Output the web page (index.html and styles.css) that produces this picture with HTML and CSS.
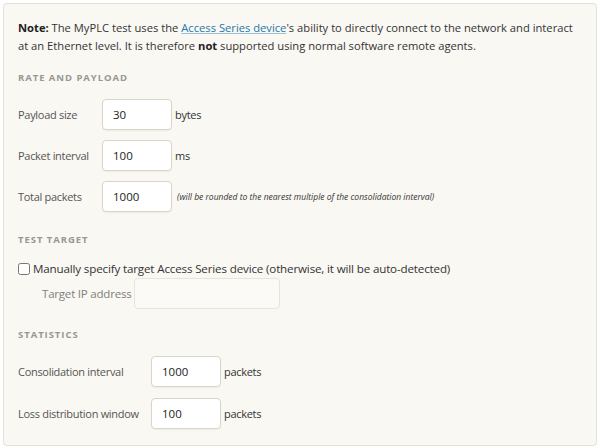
FILE: index.html
```html
<!DOCTYPE html>
<html>
<head>
    <meta charset="UTF-8">
    <title>MyPLC test settings</title>
    <link rel="stylesheet" href="styles.css">
</head>
<body>
    <div class="panel">
        <p class="note">
            <b>Note:</b> The MyPLC test uses the <a href="#">Access Series device</a>'s ability to directly connect to the network and interact at an Ethernet level. It is therefore <b>not</b> supported using normal software remote agents.
        </p>

        <!-- Rate and payload -->
        <h3 class="first">Rate and payload</h3>
        <div class="fields">
            <div class="row">
                <label class="lbl w1" for="payload">Payload size</label>
                <input type="text" id="payload" value="30">
                <span class="unit">bytes</span>
            </div>
            <div class="row">
                <label class="lbl w1" for="interval">Packet interval</label>
                <input type="text" id="interval" value="100">
                <span class="unit">ms</span>
            </div>
            <div class="row">
                <label class="lbl w1" for="total">Total packets</label>
                <input type="text" id="total" value="1000">
                <span class="hint">(will be rounded to the nearest multiple of the consolidation interval)</span>
            </div>
        </div>

        <!-- Test target -->
        <h3>Test target</h3>
        <label class="check"><input type="checkbox"> Manually specify target Access Series device (otherwise, it will be auto-detected)</label>
        <div class="row sub">
            <label class="lbl muted" for="target">Target IP address</label>
            <input type="text" id="target" class="wide" disabled>
        </div>

        <!-- Statistics -->
        <h3 class="after-sub">Statistics</h3>
        <div class="fields stats">
            <div class="row">
                <label class="lbl w2" for="consol">Consolidation interval</label>
                <input type="text" id="consol" value="1000">
                <span class="unit">packets</span>
            </div>
            <div class="row">
                <label class="lbl w2" for="loss">Loss distribution window</label>
                <input type="text" id="loss" value="100">
                <span class="unit">packets</span>
            </div>
        </div>
    </div>
</body>
</html>
```

FILE: styles.css
```css
body {
    margin: 3px 3px 0 3px;
    background: #fff;
    font-family: "Open Sans", sans-serif;
    font-size: 11px;
    letter-spacing: -0.3px;
    color: #444;
}
.panel {
    box-sizing: border-box;
    height: 443px;
    background: #faf8f3;
    border: 1px solid #e4e1d8;
    border-radius: 4px;
    box-shadow: 0 0 2px rgba(120, 110, 80, 0.12);
    padding: 15px 13px 14px 14px;
}
.note {
    margin: 0;
    font-size: 11.2px;
    letter-spacing: 0;
    line-height: 18px;
    color: #333;
}
.note b {
    color: #222;
}
a {
    color: #2677a8;
    text-decoration: underline;
    text-decoration-color: #9cc0d8;
}
h3 {
    margin: 22px 0 15px;
    line-height: 12px;
    font-size: 9.5px;
    font-weight: 700;
    letter-spacing: 0.95px;
    text-transform: uppercase;
    color: #9a9690;
}
h3.first {
    margin-top: 17px;
}
h3.after-sub {
    margin-top: 20px;
}
.fields {
    display: flex;
    flex-direction: column;
    gap: 10px;
}
.stats {
    gap: 11px;
}
.row {
    display: flex;
    align-items: center;
}
.lbl {
    color: #555;
    white-space: nowrap;
}
.w1 {
    width: 84px;
}
.w2 {
    width: 133px;
}
input[type=text] {
    box-sizing: border-box;
    width: 70px;
    height: 31px;
    padding: 0 10px;
    margin: 0 3px 0 0;
    border: 1px solid #d9d5c8;
    border-radius: 4px;
    background: #fff;
    box-shadow: 0 1px 1px rgba(120, 110, 80, 0.08);
    font-family: inherit;
    font-size: 11.5px;
    color: #222;
}
input.wide {
    width: 146px;
    background: #fbfaf6;
    border-color: #e8e4d8;
    box-shadow: none;
    margin-left: 2px;
}
.unit {
    color: #333;
}
.hint {
    font-size: 8.5px;
    font-style: italic;
    letter-spacing: 0;
    color: #333;
    margin-left: 2px;
}
.check {
    display: flex;
    align-items: center;
    height: 15px;
    font-size: 11.6px;
    letter-spacing: -0.15px;
    color: #333;
}
.check input {
    margin: 0 3px 0 0;
    width: 12px;
    height: 12px;
}
.sub {
    padding-left: 24px;
    margin-top: 2px;
}
.sub .lbl {
    font-size: 11.5px;
    letter-spacing: -0.2px;
}
.muted {
    color: #808080;
}
```
